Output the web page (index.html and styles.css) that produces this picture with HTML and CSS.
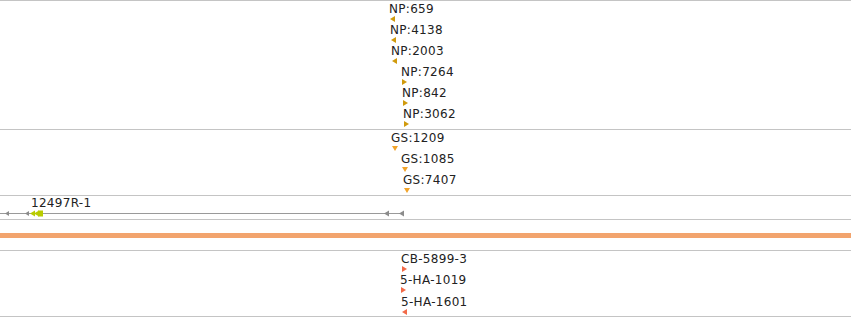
FILE: index.html
```html
<!DOCTYPE html>
<html lang="en">
<head>
    <meta charset="UTF-8">
    <title>Tracks</title>
    <link rel="stylesheet" href="styles.css">
</head>
<body>

<div class="track t-np">
    <div class="feat" style="left:389px;top:2px"><span class="lbl">NP:659</span><i class="tri left np"></i></div>
    <div class="feat" style="left:390px;top:23px"><span class="lbl">NP:4138</span><i class="tri left np"></i></div>
    <div class="feat" style="left:391px;top:44px"><span class="lbl">NP:2003</span><i class="tri left np"></i></div>
    <div class="feat" style="left:401px;top:65px"><span class="lbl">NP:7264</span><i class="tri right np"></i></div>
    <div class="feat" style="left:402px;top:86px"><span class="lbl">NP:842</span><i class="tri right np"></i></div>
    <div class="feat" style="left:403px;top:107px"><span class="lbl">NP:3062</span><i class="tri right np"></i></div>
</div>

<div class="track t-gs">
    <div class="feat" style="left:391px;top:2px"><span class="lbl">GS:1209</span><i class="tri down gs"></i></div>
    <div class="feat" style="left:401px;top:23px"><span class="lbl">GS:1085</span><i class="tri down gs"></i></div>
    <div class="feat" style="left:403px;top:44px"><span class="lbl">GS:7407</span><i class="tri down gs"></i></div>
</div>

<div class="track t-gene">
    <div class="feat" style="left:31px;top:1px"><span class="lbl">12497R-1</span></div>
    <svg class="gene" width="410" height="9" viewBox="0 0 410 9">
        <line x1="0" y1="4.5" x2="404" y2="4.5" stroke="#9a9a9a" stroke-width="1"/>
        <path d="M5 4.5L9 2V7Z" fill="#8c8c8c"/>
        <path d="M25 4.5L29 2V7Z" fill="#8c8c8c"/>
        <path d="M384 4.5L389 1.5V7.5Z" fill="#8c8c8c"/>
        <path d="M399 4.5L404 1.5V7.5Z" fill="#8c8c8c"/>
        <path d="M30 4.5L35 1.5V7.5Z" fill="#b9cc00"/>
        <path d="M34 4.5L39 1.5V7.5Z" fill="#b9cc00"/>
        <rect x="38" y="1.5" width="5" height="6" fill="#b9cc00"/>
    </svg>
</div>

<div class="divider">
    <div class="bar"></div>
</div>

<div class="track t-cb">
    <div class="feat" style="left:401px;top:2px"><span class="lbl">CB-5899-3</span><i class="tri right cb"></i></div>
    <div class="feat" style="left:400px;top:23px"><span class="lbl">5-HA-1019</span><i class="tri right cb"></i></div>
    <div class="feat" style="left:401px;top:45px"><span class="lbl">5-HA-1601</span><i class="tri left cb"></i></div>
</div>

</body>
</html>
```

FILE: styles.css
```css
*{margin: 0; padding: 0;}
html,body{
    height: 100%;
    background: #fff;
}
body{
    width: 851px;
    font-family: "DejaVu Sans", Verdana, sans-serif;
    font-size: 12px;
    color: #222;
}
.track{
    position: relative;
    border-top: 1px solid #c4c4c4;
}
.t-np{
    height: 128px;
}
.t-gs{
    height: 65px;
}
.t-gene{
    height: 23px;
}
.t-cb{
    height: 65px;
    border-bottom: 1px solid #c4c4c4;
}
.divider{
    height: 31px;
    padding-top: 13px;
    border-top: 1px solid #c4c4c4;
    box-sizing: border-box;
}
.divider .bar{
    height: 5px;
    background: #f2a46e;
}
.feat{
    position: absolute;
}
.lbl{
    display: block;
    line-height: 13px;
    letter-spacing: 0.3px;
    white-space: nowrap;
}
.tri{
    display: block;
    width: 0;
    height: 0;
    margin-left: 1px;
}
.tri.left{
    border-top: 3px solid transparent;
    border-bottom: 3px solid transparent;
    border-right: 5px solid currentColor;
}
.tri.right{
    border-top: 3px solid transparent;
    border-bottom: 3px solid transparent;
    border-left: 5px solid currentColor;
}
.tri.down{
    margin-top: 1px;
    border-left: 3px solid transparent;
    border-right: 3px solid transparent;
    border-top: 5px solid currentColor;
}
.np{
    color: #d09a0c;
}
.gs{
    color: #f2a42a;
}
.cb{
    color: #f26a48;
}
.gene{
    position: absolute;
    left: 0;
    top: 13px;
}
```
